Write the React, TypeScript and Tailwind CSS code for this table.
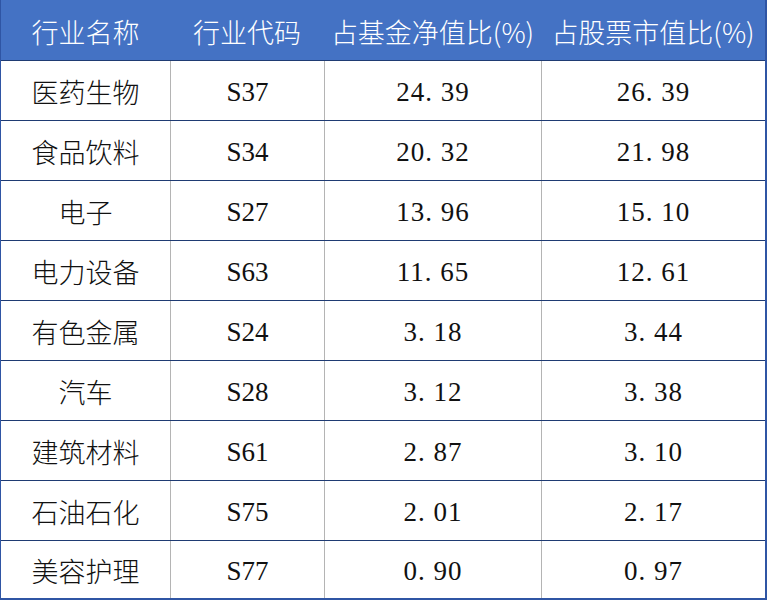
import React from 'react';

const rows = [
  ['医药生物', 'S37', '24.39', '26.39'],
  ['食品饮料', 'S34', '20.32', '21.98'],
  ['电子', 'S27', '13.96', '15.10'],
  ['电力设备', 'S63', '11.65', '12.61'],
  ['有色金属', 'S24', '3.18', '3.44'],
  ['汽车', 'S28', '3.12', '3.38'],
  ['建筑材料', 'S61', '2.87', '3.10'],
  ['石油石化', 'S75', '2.01', '2.17'],
  ['美容护理', 'S77', '0.90', '0.97'],
];

const cjk = { fontFamily: '"Noto Sans CJK SC", sans-serif' };
const num = { fontFamily: '"Liberation Serif", "Noto Sans CJK SC", serif' };

export default function App() {
  return (
    <div className="w-[767px] h-[601px] bg-white">
      <div className="flex flex-col border-l border-r-2 border-b-2 border-[#2f55a4]">
        <div className="flex h-[60px] bg-[#4472c4] text-white text-[27px] font-light" style={cjk}>
          <div className="w-[169px] flex items-center justify-center pt-[4px]">行业名称</div>
          <div className="w-[154px] flex items-center justify-center pt-[4px]">行业代码</div>
          <div className="w-[217px] flex items-center justify-center pt-[4px] whitespace-nowrap">占基金净值比(%)</div>
          <div className="w-[224px] flex items-center justify-center pt-[4px] whitespace-nowrap">占股票市值比(%)</div>
        </div>
        {rows.map((r, i) => (
          <div key={i} className={`flex border-t border-[#1f3b73] ${i === rows.length - 1 ? 'h-[58px]' : 'h-[60px]'} text-[#111]`}>
            <div className="w-[169px] flex items-center justify-center pt-[3px] text-[27px] font-light" style={cjk}>
              {r[0]}
            </div>
            <div className="w-[154px] flex items-center justify-center pt-[3px] border-l border-[#b4b4b4] text-[27px]" style={num}>
              {r[1]}
            </div>
            <div className="w-[217px] flex items-center justify-center pt-[3px] border-l border-[#b4b4b4] text-[27px] tracking-[1px]" style={num}>
              {r[2].replace('.', '. ')}
            </div>
            <div className="w-[224px] flex items-center justify-center pt-[3px] border-l border-[#b4b4b4] text-[27px] tracking-[1px]" style={num}>
              {r[3].replace('.', '. ')}
            </div>
          </div>
        ))}
      </div>
    </div>
  );
}
